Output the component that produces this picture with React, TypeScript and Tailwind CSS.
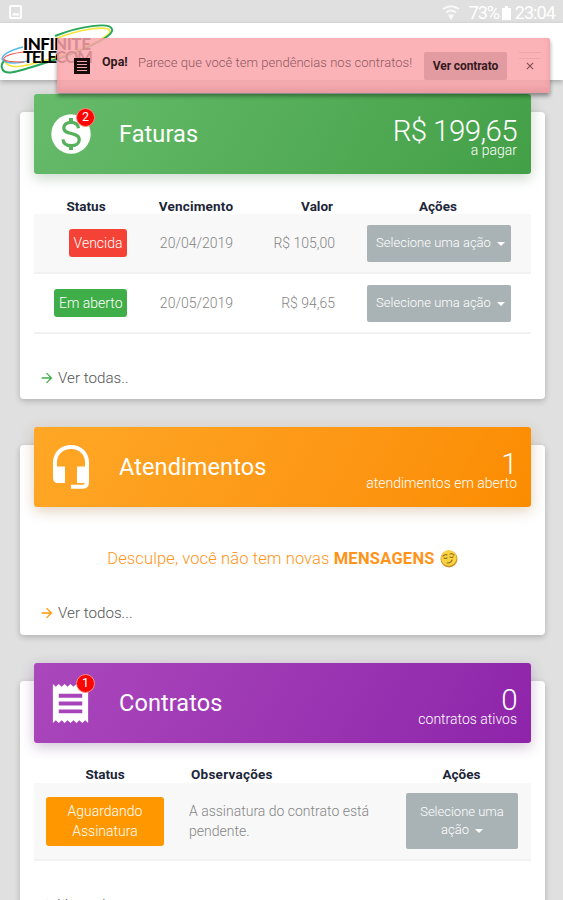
import type { ReactNode } from "react";
import { MdArrowForward, MdReceipt, MdClose } from "react-icons/md";

function StatusBar() {
  return (
    <div className="flex h-[23px] items-center justify-between bg-[#e0e0e0] pr-[8px] pl-[9px] text-white">
      <svg viewBox="0 0 13 14" className="h-[14px] w-[13px]">
        <rect x="1" y="1" width="11" height="12" rx="1" fill="none" stroke="white" strokeWidth="1.8" />
        <path d="M3 10.500l2-3 2 1.500L9 7.500l1.500 3z" fill="white" />
      </svg>
      <div className="flex items-center pt-[3px]">
        <svg viewBox="0 0 18 16" className="mr-[9px] h-[16px] w-[18px] opacity-80" fill="none" stroke="white" strokeWidth="2">
          <path d="M1 4Q9-1.500 17 4" />
          <path d="M4 7.500q5-4 10 0" />
          <path d="M6 9.500h6l-3 6z" fill="white" stroke="none" />
        </svg>
        <span className="mr-[3px] w-[30px] text-[18px] leading-[20px] tracking-[-1.100px]">73%</span>
        <svg viewBox="0 0 9 14" className="mr-[4px] h-[14px] w-[9px]" fill="white">
          <path d="M3 0h3v2h3v12H0V2h3z" />
        </svg>
        <span className="text-[18px] leading-[20px] tracking-[-0.9px]">23:04</span>
      </div>
    </div>
  );
}

function Logo() {
  return (
    <div className="relative h-[56px] w-[116px]">
      <svg viewBox="0 0 116 56" className="absolute inset-0 h-full w-full" fill="none">
        <path d="M55 16C80 6 107 2 110 8C110 14 80 27 50 36S10 46 5 39" stroke="#f5e63c" strokeWidth="1.600" />
        <path d="M23 24Q3 29 2 36Q7 43 28 38" stroke="#55b9e8" strokeWidth="1.500" />
        <path d="M23 29Q7 31 4 35T24 39" stroke="#ed5550" strokeWidth="1.200" />
        <path d="M55 13C80 3 110-1 112 6C115 14 77 30 48 39S4 54 2 45C1 42 2 40 4 38" stroke="#26a85a" strokeWidth="2" />
      </svg>
      <div className="absolute top-[14px] left-[23px] font-['Lato'] text-[17px] leading-[13px] text-black">
        <div className="font-black tracking-[-0.5px]">INFINITE</div>
        <div className="font-bold tracking-[-1.500px]">TELECOM</div>
      </div>
    </div>
  );
}

function Toast() {
  return (
    <div className="absolute top-[38px] left-[57px] z-20 flex h-[55px] w-[493px] items-center rounded-[2px] bg-[#fba6ab]/85 pl-[17px] text-[12px] shadow-[0_3px_4px_rgba(0,0,0,0.4),inset_0_-5px_7px_rgba(160,60,70,0.18)]">
      <svg viewBox="0 0 16 16" className="mr-[12px] h-[16px] w-[16px]">
        <path d="M0 0h16v16H0z" fill="#170b0c" />
        <path d="M3 3.500h10M3 6.500h10M3 9.500h10M3 12.500h10" stroke="#f1a5a9" strokeWidth="1.200" />
      </svg>
      <span className="w-[36px] pb-[6px] text-[12.5px] font-bold text-[#30191c]">Opa!</span>
      <span className="w-[286px] pb-[6px] text-[13px] font-light tracking-[0.04px] whitespace-nowrap text-[#8d5a5e]">
        Parece que você tem pendências nos contratos!
      </span>
      <button className="h-[28px] w-[83px] rounded-[2px] bg-[#e19ba1] text-[12px] font-bold tracking-[-0.1px] text-[#35191d]">
        Ver contrato
      </button>
      <MdClose className="ml-[17px] h-[12px] w-[12px] text-[#79494d]" />
    </div>
  );
}

function DollarIcon() {
  return (
    <svg viewBox="0 0 40 40" className="ml-[2px] h-[40px] w-[40px]" fill="none">
      <circle cx="20" cy="20" r="19.700" fill="white" />
      <path d="M27.500 14.300C27 10.300 24 8.300 20 8.300C15.800 8.300 12.800 10.600 12.800 14C12.800 21.500 28.200 17.500 28.200 25.500C28.200 29.500 24.500 31.700 20.300 31.700C16 31.700 12.300 29.800 12 25.300" stroke="#57b15c" strokeWidth="3.200" />
      <path d="M20 4v5M20 31v5" stroke="#57b15c" strokeWidth="4" />
    </svg>
  );
}

function HeadsetIcon() {
  return (
    <svg viewBox="0 0 36 44" className="ml-[4px] h-[44px] w-[36px]" fill="none">
      <path d="M2 24V17.500C2 8 9 2 18 2S34 8 34 17.500V37Q34 41.700 30 41.700H18" stroke="white" strokeWidth="4" />
      <path d="M0 21.500h12V38H5Q0 38 0 33zM24 21.500h12V38H24z" fill="white" />
    </svg>
  );
}

type CardProps = {
  title: string;
  amount: string;
  caption: string;
  tone: string;
  icon: ReactNode;
  badge?: string;
  className: string;
  children: ReactNode;
};

function Card({ title, amount, caption, tone, icon, badge, className, children }: CardProps) {
  return (
    <section className={`ml-[20px] flex w-[525px] shrink-0 flex-col rounded-[4px] bg-white px-[14px] shadow-[0_2px_6px_rgba(0,0,0,0.22)] ${className}`}>
      <header className={`-mt-[18px] flex h-[80px] w-[497px] shrink-0 items-center rounded-[3px] pr-[14px] pl-[15px] text-white ${tone}`}>
        <div className="relative w-[70px]">
          {icon}
          {badge && (
            <span className="absolute top-[-6px] left-[27px] flex h-[19px] w-[19px] items-center justify-center rounded-full border border-[#f98c80] bg-[#fb0505] text-[12.5px]">
              {badge}
            </span>
          )}
        </div>
        <h2 className="pt-[2px] text-[23.5px] tracking-[0.1px]">{title}</h2>
        <div className="ml-auto pt-[5px] text-right font-light">
          <div className="pt-[2px] text-[29.5px] leading-[25px] tracking-[-0.6px]">{amount}</div>
          <div className="text-[14px] leading-[12px]">{caption}</div>
        </div>
      </header>
      {children}
    </section>
  );
}

function Caret() {
  return <span className="ml-[6px] inline-block h-0 w-0 border-x-[4px] border-t-[4px] border-x-transparent border-t-white align-middle" />;
}

type InvoiceProps = { status: string; color: string; date: string; value: string; row: string };

function Invoice({ status, color, date, value, row }: InvoiceProps) {
  return (
    <div className={`grid w-[497px] shrink-0 grid-cols-[93px_138px_70px_196px] items-center border-b-2 border-[#f2f2f2] text-[14px] font-light text-[#858585] ${row}`}>
      <span className={`justify-self-end rounded-[3px] px-[4.500px] py-[4px] leading-[20px] text-white ${color}`}>{status}</span>
      <span className="pl-[1px] text-center">{date}</span>
      <span className="text-right whitespace-nowrap">{value}</span>
      <button className="ml-[32px] h-[37px] w-[144px] rounded-[2px] bg-[#a9b3b5] pl-[3px] text-[13px] whitespace-nowrap text-white">
        Selecione uma ação
        <Caret />
      </button>
    </div>
  );
}

function MoreLink({ label, color }: { label: string; color: string }) {
  return (
    <a className="flex items-center gap-[3px] pl-[5px] text-[15.200px] leading-[20px] font-light text-[#555]">
      <MdArrowForward className={`h-[16px] w-[16px] ${color}`} />
      {label}
    </a>
  );
}

function SmirkFace() {
  return (
    <svg viewBox="0 0 18 18" className="h-[18px] w-[18px]">
      <circle cx="9" cy="9" r="8.500" fill="#c9922a" />
      <circle cx="8.800" cy="8" r="7.800" fill="#fbd33f" />
      <path d="M3 6q2-2 4-1M10 4q2-1 4 1M4 8q2 1 3 0M10 7q2 1 3 0M7 13q4 0 5-3" fill="none" stroke="#96752b" strokeWidth="1.200" strokeLinecap="round" />
    </svg>
  );
}

export default function App() {
  return (
    <div className="relative flex h-[900px] w-[563px] flex-col overflow-hidden bg-[#e0e0e0] font-['Roboto',sans-serif]">
      <StatusBar />
      <nav className="flex h-[57px] shrink-0 items-start justify-between bg-white shadow-[0_2px_5px_rgba(0,0,0,0.25)]">
        <Logo />
        <div className="mt-[29px] mr-[22px] h-[7px] w-[22px] border-y border-[#aaa]" />
      </nav>
      <Toast />

      <Card
        title="Faturas"
        amount="R$ 199,65"
        caption="a pagar"
        badge="2"
        tone="bg-linear-120 from-[#66bb6a] to-[#43a047] shadow-[0_4px_14px_rgba(60,110,65,0.28)]"
        icon={<DollarIcon />}
        className="mt-[32px] h-[287px]"
      >
        <div className="mt-[24px] grid w-[497px] shrink-0 grid-cols-[104px_116px_85px_198px] text-[13.5px] leading-[16px] font-bold text-[#1c2638]">
          <span className="text-center">Status</span>
          <span className="text-center tracking-[0.2px]">Vencimento</span>
          <span className="pr-[6px] text-right">Valor</span>
          <span className="text-center">Ações</span>
        </div>
        <Invoice status="Vencida" color="bg-[#f44336]" date="20/04/2019" value="R$ 105,00" row="h-[60px] bg-[#f8f8f8]" />
        <Invoice status="Em aberto" color="bg-[#3fae49]" date="20/05/2019" value="R$ 94,65" row="h-[60px]" />
        <div className="mt-[34px]">
          <MoreLink label="Ver todas.." color="text-[#3fae49]" />
        </div>
      </Card>

      <Card
        title="Atendimentos"
        amount="1"
        caption="atendimentos em aberto"
        tone="bg-linear-120 from-[#ffa726] to-[#fb8c00] shadow-[0_4px_14px_rgba(150,90,20,0.28)]"
        icon={<HeadsetIcon />}
        className="mt-[46px] h-[190px]"
      >
        <div className="mt-[41px] flex items-center justify-center gap-[5px] text-[16.5px] leading-[22px] font-light tracking-[0.12px] text-[#ff9418]">
          <p>
            Desculpe, você não tem novas <strong className="font-bold tracking-[0.25px]">MENSAGENS</strong>
          </p>
          <SmirkFace />
        </div>
        <div className="mt-[33px]">
          <MoreLink label="Ver todos..." color="text-[#ff9800]" />
        </div>
      </Card>

      <Card
        title="Contratos"
        amount="0"
        caption="contratos ativos"
        badge="1"
        tone="bg-linear-120 from-[#ab47bc] to-[#8e24aa] shadow-[0_4px_14px_rgba(90,35,105,0.28)]"
        icon={<MdReceipt className="-ml-[2px] h-[47px] w-[47px]" />}
        className="mt-[46px] h-[260px]"
      >
        <div className="mt-[23px] grid w-[497px] shrink-0 grid-cols-[142px_216px_139px] text-[13.5px] leading-[16px] font-bold text-[#1c2638]">
          <span className="text-center">Status</span>
          <span className="pl-[15px] tracking-[0.25px]">Observações</span>
          <span className="text-center">Ações</span>
        </div>
        <div className="mt-px grid h-[78px] w-[497px] shrink-0 grid-cols-[130px_242px_112px] items-center border-b-2 border-[#f2f2f2] bg-[#f8f8f8] text-[14px] leading-[20px] font-light text-[#858585]">
          <span className="ml-[12px] flex h-[49px] items-center justify-center rounded-[3px] bg-[#ff9800] text-center text-white">
            Aguardando
            <br />
            Assinatura
          </span>
          <span className="pl-[25px]">
            A assinatura do contrato está
            <br />
            pendente.
          </span>
          <button className="h-[56px] rounded-[2px] bg-[#a9b3b5] text-[13px] leading-[18px] text-white">
            Selecione uma
            <br />
            ação
            <Caret />
          </button>
        </div>
        <div className="mt-[34px]">
          <MoreLink label="Ver todos..." color="text-[#9c27b0]" />
        </div>
      </Card>
    </div>
  );
}
